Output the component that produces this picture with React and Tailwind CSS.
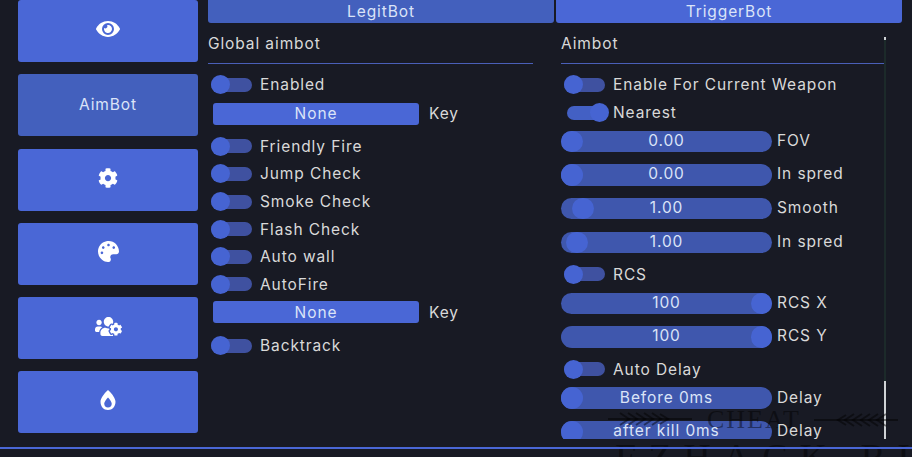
import React from 'react'
import { FaEye, FaCog, FaPalette, FaUsersCog, FaBurn } from 'react-icons/fa'

const Toggle = ({ label, on = false }) => (
  <div className="flex h-[27.6px] items-center">
    <div className={`relative h-[14px] w-[41px] rounded-full ${on ? 'ml-[6px] bg-[#4360c4]' : 'ml-[3px] bg-[#3f51a0]'}`}>
      <div className={`absolute top-[-2.5px] size-[19px] rounded-full bg-[#4664d2] ${on ? 'right-[-1px]' : 'left-0'}`} />
    </div>
    <span className={`text-[15.5px] tracking-[0.9px] text-[#d9d9d9] ${on ? 'ml-[5px]' : 'ml-[8px]'}`}>{label}</span>
  </div>
)

const KeyBind = ({ label = 'Key' }) => (
  <div className="flex h-[28px] items-center">
    <div className="ml-[5px] flex h-[22px] w-[206px] items-center justify-center rounded-[3px] bg-[#4a67d6] text-[15.5px] tracking-[0.9px] text-[#dbe4f8]">None</div>
    <span className="ml-[10px] text-[15.5px] tracking-[0.9px] text-[#d9d9d9]">{label}</span>
  </div>
)

const Slider = ({ value, label, pos }) => (
  <div className="flex h-[33.6px] items-center">
    <div className="relative flex h-[21.5px] w-[211px] items-center justify-center rounded-full bg-[#3f57ad] text-[15.5px] tracking-[0.9px] text-[#dbe4f8]">
      <div className="absolute top-0 size-[21.5px] rounded-full bg-[#4664d2]" style={{ left: pos }} />
      <span className="relative z-20 pb-[2px]">{value}</span>
    </div>
    <span className="relative z-20 ml-[5px] pb-[2px] text-[15.5px] tracking-[0.9px] text-[#d9d9d9]">{label}</span>
  </div>
)

const Heading = ({ children }) => (
  <div className="h-[34px] border-b border-[#4a5fb8] pt-[3px] text-[15.5px] leading-[22px] tracking-[0.9px] text-[#d9d9d9]">{children}</div>
)

const SideButton = ({ children, active }) => (
  <div className={`flex h-[62px] shrink-0 items-center justify-center rounded-[3px] pb-[4px] text-white ${active ? 'bg-[#4360bd]' : 'bg-[#4a67d6]'}`}>
    {children}
  </div>
)

// the site watermark that sits over the bottom right corner
const Feather = ({ className }) => (
  <svg className={className} width="84" height="18" viewBox="0 0 84 18" fill="none" stroke="currentColor" strokeWidth="2">
    <path d="M0 9H84" />
    <path d="M12 3l9 6-9 6M20 3l9 6-9 6M28 3l9 6-9 6M36 3l9 6-9 6M44 3l9 6-9 6M52 4l8 5-8 5" />
  </svg>
)

const Watermark = () => (
  <div className="pointer-events-none absolute top-0 left-0 z-10 h-full w-full text-black/45">
    <Feather className="absolute top-[410px] left-[608px]" />
    <div className="absolute top-[406px] left-[707px] font-['Liberation_Serif',serif] text-[26px] leading-[28px] tracking-[2px]">CHEAT</div>
    <Feather className="absolute top-[411px] left-[814px] rotate-180" />
    <div className="absolute top-[436px] left-[615px] font-['Liberation_Serif',serif] text-[38px] leading-[42px] tracking-[12px]">FZHACK.RU</div>
  </div>
)

export default function App() {
  return (
    <div className="relative h-[457px] w-[912px] overflow-hidden bg-[#181a24] font-['Inter',sans-serif]">
      <div className="flex h-[447px]">
        <div className="ml-[18px] flex w-[180px] flex-col gap-[12.3px]">
          <SideButton><FaEye size={24} /></SideButton>
          <SideButton active><span className="pt-[3px] text-[15.5px] tracking-[0.9px] text-[#dbe4f8]">AimBot</span></SideButton>
          <SideButton><FaCog size={20} /></SideButton>
          <SideButton><FaPalette size={21} /></SideButton>
          <SideButton><FaUsersCog size={27} /></SideButton>
          <SideButton><FaBurn size={20} /></SideButton>
        </div>

        <div className="ml-[10px] flex w-[694px] flex-col">
          <div className="flex h-[23px] gap-[2px]">
            <div className="flex w-[346px] items-center justify-center rounded-b-[3px] bg-[#4360bd] text-[15.5px] tracking-[0.9px] text-[#dbe4f8]">LegitBot</div>
            <div className="flex w-[346px] items-center justify-center rounded-b-[3px] bg-[#4a67d6] text-[15.5px] tracking-[0.9px] text-[#dbe4f8]">TriggerBot</div>
          </div>

          <div className="flex h-[416px] overflow-hidden">
            <div className="w-[325px]">
              <div className="mt-[7px]"><Heading>Global aimbot</Heading></div>
              <div className="mt-[7px]">
                <Toggle label="Enabled" />
                <div className="mt-[1px]"><KeyBind /></div>
                <div className="mt-[5px]">
                  <Toggle label="Friendly Fire" />
                  <Toggle label="Jump Check" />
                  <Toggle label="Smoke Check" />
                  <Toggle label="Flash Check" />
                  <Toggle label="Auto wall" />
                  <Toggle label="AutoFire" />
                </div>
                <KeyBind />
                <div className="mt-[6px]"><Toggle label="Backtrack" /></div>
              </div>
            </div>

            <div className="ml-[28px] flex w-[325px]">
              <div className="w-[323px] shrink-0">
                <div className="mt-[7px]"><Heading>Aimbot</Heading></div>
                <div className="mt-[7px]">
                  <Toggle label="Enable For Current Weapon" />
                  <div className="mt-[0.5px]"><Toggle label="Nearest" on /></div>
                  <div className="-mt-[2px]">
                    <Slider value="0.00" label="FOV" pos="0px" />
                    <Slider value="0.00" label="In spred" pos="0px" />
                    <Slider value="1.00" label="Smooth" pos="11px" />
                    <Slider value="1.00" label="In spred" pos="5px" />
                  </div>
                  <div className="mt-[1.5px]"><Toggle label="RCS" /></div>
                  <div className="-mt-[1.5px]">
                    <Slider value="100" label="RCS X" pos="189.5px" />
                    <Slider value="100" label="RCS Y" pos="189.5px" />
                  </div>
                  <div className="mt-[1.5px]"><Toggle label="Auto Delay" /></div>
                  <div className="-mt-[1.5px]">
                    <Slider value="Before 0ms" label="Delay" pos="0px" />
                    <Slider value="after kill 0ms" label="Delay" pos="0px" />
                  </div>
                </div>
              </div>
              <div className="relative mt-[14px] w-[2px] bg-[#1c2a2a]">
                <div className="h-[3px] bg-[#cfd3d6]" />
                <div className="absolute bottom-0 h-[58px] w-[2px] bg-[#cfd3d6]" />
              </div>
            </div>
          </div>
        </div>
      </div>
      <Watermark />
      <div className="relative z-20 h-[2px] bg-[#4a67d6]" />
    </div>
  )
}
